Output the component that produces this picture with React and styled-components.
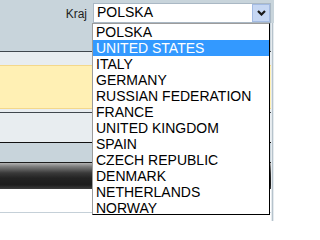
import React from 'react';
import styled, { createGlobalStyle } from 'styled-components';

const GlobalStyle = createGlobalStyle`
  html, body {
    margin: 0;
    padding: 0;
    background: #ffffff;
  }
  body {
    font-family: "Liberation Sans", Arial, sans-serif;
  }
`;

const Page = styled.div`
  position: relative;
  display: flex;
  width: 274px;
  height: 221px;
  overflow: hidden;
  background: #ffffff;
`;

const Main = styled.div`
  display: flex;
  flex-direction: column;
  flex: 1;
`;

const Side = styled.div`
  display: flex;
  flex-direction: column;
  width: 3px;
`;

const SideCap = styled.div`
  height: 23px;
  background: #c8d4db;
`;

const SideStrip = styled.div`
  flex: 1;
  background: linear-gradient(to right, #e6ebef 1px, #b6c3cc 1px 2px, #e6ebef 2px);
`;

const Header = styled.div`
  display: flex;
  justify-content: flex-end;
  align-items: flex-start;
  height: 52px;
  box-sizing: border-box;
  padding-top: 3px;
  background: #c8d4db;
  border-bottom: 1px solid #40474d;
`;

const Label = styled.span`
  margin: 1px 6px 0 0;
  font-size: 12px;
  line-height: 20px;
  color: #1e1e1e;
`;

const SelectBox = styled.div`
  display: flex;
  width: 178px;
  height: 20px;
  box-sizing: border-box;
  border: 1px solid #aab8c4;
  background: #ffffff;
`;

const SelectValue = styled.span`
  flex: 1;
  padding-left: 3px;
  font-size: 14px;
  line-height: 16px;
  color: #000000;
`;

const ArrowButton = styled.div`
  display: flex;
  align-items: center;
  justify-content: center;
  width: 18px;
  height: 18px;
  box-sizing: border-box;
  border: 1px solid #a3bbe3;
  background: #c6d7f3;
`;

const Band = styled.div`
  height: ${(p) => p.$h}px;
  box-sizing: border-box;
  background: ${(p) => p.$bg};
  border-top: ${(p) => (p.$top ? `1px solid ${p.$top}` : 'none')};
  border-bottom: ${(p) => (p.$bottom ? `1px solid ${p.$bottom}` : 'none')};
`;

const DarkBar = styled.div`
  height: 26px;
  background: linear-gradient(
    to bottom,
    #b4b4b4 0%,
    #7c7c7c 14%,
    #3a3a3a 38%,
    #232323 58%,
    #1d1d1d 84%,
    #3e3e3e 100%
  );
`;

const Fill = styled.div`
  flex: 1;
  background: #ffffff;
`;

const ListBox = styled.div`
  position: absolute;
  top: 23px;
  left: 92px;
  width: 178px;
  height: 192px;
  box-sizing: border-box;
  overflow: hidden;
  background: #ffffff;
  border: 1px solid #000000;
  border-left-color: #9c9c9c;
  border-top-color: #9c9c9c;
`;

const Option = styled.div`
  height: 16px;
  padding-left: 3px;
  font-size: 14px;
  line-height: 16px;
  white-space: nowrap;
  color: ${(p) => (p.$active ? '#ffffff' : '#000000')};
  background: ${(p) => (p.$active ? '#3399ff' : 'transparent')};
`;

const countries = [
  'POLSKA',
  'UNITED STATES',
  'ITALY',
  'GERMANY',
  'RUSSIAN FEDERATION',
  'FRANCE',
  'UNITED KINGDOM',
  'SPAIN',
  'CZECH REPUBLIC',
  'DENMARK',
  'NETHERLANDS',
  'NORWAY',
];

const Chevron = () => (
  <svg width="9" height="6" viewBox="0 0 9 6">
    <path d="M1 1 L4.5 4.5 L8 1" fill="none" stroke="#1a1a1a" strokeWidth="2.2" />
  </svg>
);

export default function App() {
  return (
    <Page>
      <GlobalStyle />
      <Main>
        <Header>
          <Label>Kraj</Label>
          <SelectBox>
            <SelectValue>POLSKA</SelectValue>
            <ArrowButton>
              <Chevron />
            </ArrowButton>
          </SelectBox>
        </Header>
        <Band $h={13} $bg="#e8edf0" />
        <Band $h={44} $bg="#fff0b4" $top="#f4d88a" $bottom="#f4d88a" />
        <Band $h={3} $bg="#e8edf0" />
        <Band $h={31} $bg="#e8edf0" $top="#40474d" $bottom="#111111" />
        <Band $h={20} $bg="#c8d4db" $bottom="#1e1e1e" />
        <DarkBar />
        <Band $h={24} $bg="#ffffff" $bottom="#c5d0d8" />
        <Fill />
      </Main>
      <Side>
        <SideCap />
        <SideStrip />
      </Side>
      <ListBox>
        {countries.map((c, i) => (
          <Option key={c} $active={i === 1}>
            {c}
          </Option>
        ))}
      </ListBox>
    </Page>
  );
}
